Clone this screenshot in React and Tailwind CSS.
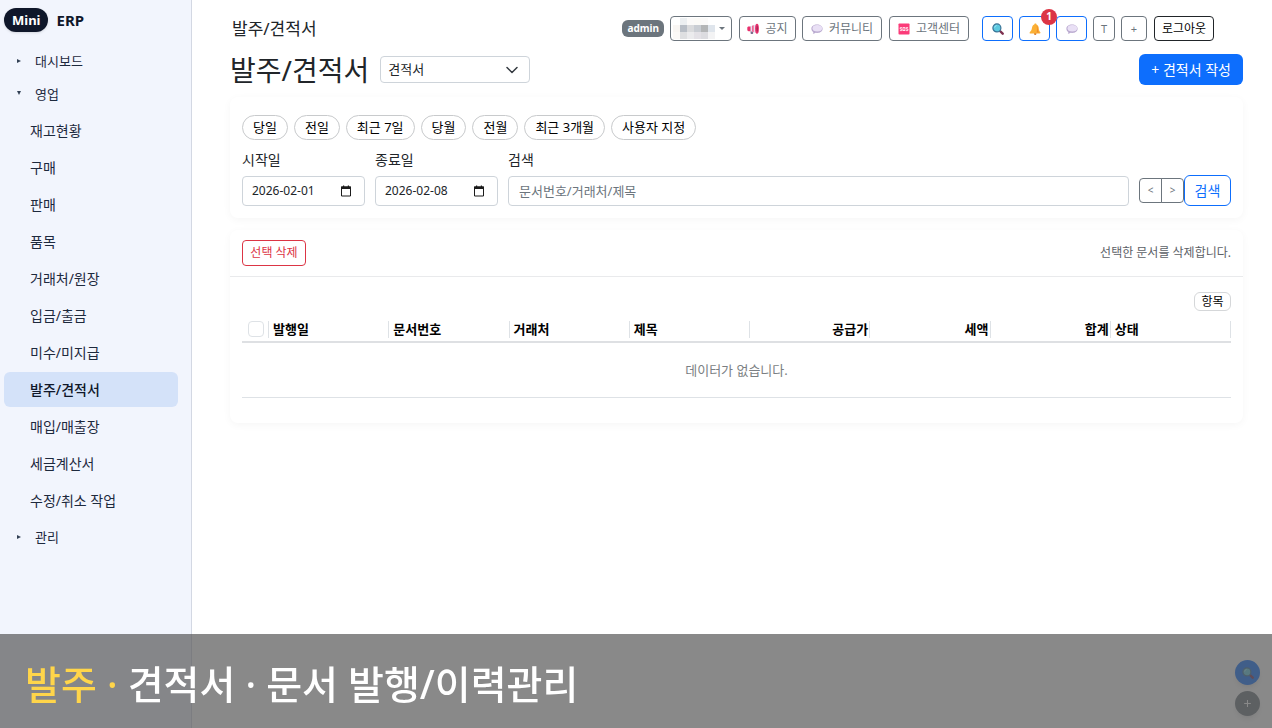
import React, { useState } from 'react';

const salesMenu = [
  '재고현황',
  '구매',
  '판매',
  '품목',
  '거래처/원장',
  '입금/출금',
  '미수/미지급',
  '발주/견적서',
  '매입/매출장',
  '세금계산서',
  '수정/취소 작업',
];

const ranges = ['당일', '전일', '최근 7일', '당월', '전월', '최근 3개월', '사용자 지정'];

const columns = [
  { label: '발행일' },
  { label: '문서번호' },
  { label: '거래처' },
  { label: '제목' },
  { label: '공급가', right: true },
  { label: '세액', right: true },
  { label: '합계', right: true },
  { label: '상태' },
];

const nameCells = [
  ['#ffffff', '#eceff1', '#fbfaf9', '#fbfaf7', '#fbfaf9', '#ffffff'],
  ['#f9f6f3', '#b8bec6', '#dadbdd', '#c9cdd3', '#b4b6b7', '#dfe5ec'],
  ['#fbf9f7', '#dedfe1', '#ebebed', '#e3e1e6', '#dcdce0', '#f3f3f4'],
];

const MagnifierIcon = ({ className = 'size-3' }) => (
  <svg viewBox="0 0 12 12" className={className} aria-hidden="true">
    <path d="M8 8l2.700 2.700" stroke="#7d3050" strokeWidth="2.400" strokeLinecap="round" />
    <circle cx="4.900" cy="4.900" r="4" fill="#5cc9e0" stroke="#3a7396" strokeWidth="1.200" />
    <path d="M2.600 4.600a2.400 2.400 0 0 1 2-2.100" stroke="#a8eefa" strokeWidth="0.800" fill="none" />
  </svg>
);

const BellIcon = () => (
  <svg viewBox="0 0 12 12" className="size-3" aria-hidden="true">
    <circle cx="6.200" cy="10.800" r="1.200" fill="#d9772b" />
    <path d="M6.4 0.4c.8 0 1.1.5 1.1 1.1C9.300 2.200 9.700 3.800 9.800 5.600c.1 1.700.6 2.700 1.500 3.700.4.600.1 1.200-.6 1.200H1.400c-.8 0-1.100-.7-.6-1.300C2 8 2.600 6.900 2.900 5.200 3.200 3.300 3.900 2 5.300 1.500c0-.6.4-1.100 1.100-1.100z" fill="#fbb034" />
    <path d="M7.500 2.200c1 .8 1.200 2.200 1.300 3.800.1 1.500.5 2.500 1.300 3.600H7.700c.4-2.300.5-5-.2-7.400z" fill="#f08a2c" />
  </svg>
);

const SpeechIcon = () => (
  <svg viewBox="0 0 12 12" className="size-3" aria-hidden="true">
    <path d="M6 1.500c3.200 0 5.600 1.800 5.600 4.200S9.200 9.900 6 9.900c-.5 0-1 0-1.500-.1-.7.600-1.700 1-2.700 1 .4-.5.600-1.100.5-1.700C1.200 8.300.4 7.100.4 5.700c0-2.400 2.400-4.200 5.600-4.200z" fill="#b9a9cf" />
    <ellipse cx="6.300" cy="5.200" rx="4.800" ry="3.200" fill="#e9e0f5" />
  </svg>
);

const MegaphoneIcon = () => (
  <svg viewBox="0 0 12 12" className="size-3" aria-hidden="true">
    <path d="M3.600 7.600h2.600v2.600c0 .5-.3.800-.8.800H4.400c-.5 0-.8-.3-.8-.8z" fill="#7c6a8c" />
    <path d="M2.800 3.400L9.600 1.200v9L2.800 8z" fill="#e9dfee" />
    <path d="M1.600 3.400h1.900v4.800H1.600C.9 8.200.3 7.600.3 6.800v-2c0-.8.6-1.400 1.300-1.400z" fill="#e8316d" />
    <path d="M5.200 2.700l1.400-.4v6.800l-1.400-.4z" fill="#f0487e" />
    <ellipse cx="10" cy="5.700" rx="1.900" ry="5" fill="#e8316d" />
    <ellipse cx="10.200" cy="5.700" rx=".7" ry="3.200" fill="#a92557" />
  </svg>
);

const SosIcon = () => (
  <svg viewBox="0 0 12 12" className="size-3" aria-hidden="true">
    <rect x="0.500" y="0.500" width="11" height="11" rx="0.800" fill="#fb3b79" />
    <g fill="none" stroke="#ffffff" strokeWidth="0.800">
      <path d="M4 4.600H2.200v1.400h1.600v1.600H1.900" />
      <rect x="5" y="4.600" width="1.900" height="3" />
      <path d="M10.100 4.600H8.200v1.400h1.700v1.600H7.900" />
    </g>
  </svg>
);

const CalendarIcon = () => (
  <svg viewBox="0 0 12 12" className="size-3 shrink-0" aria-hidden="true">
    <path d="M1.500 2h9v9h-9z" fill="none" stroke="#1b1b1b" />
    <path d="M1 1.500h10V4H1zM3 .5h1.200v1.500H3zM7.800.5H9V2H7.800z" fill="#1b1b1b" />
  </svg>
);

const Arrow = ({ open }) => (
  <svg viewBox="0 0 6 6" className="size-1.5" aria-hidden="true">
    <path d={open ? 'M1 0h4L3 4z' : 'M1 1v4l4-2z'} fill="#334155" />
  </svg>
);

const topButton = 'flex h-[25px] items-center justify-center rounded border bg-white text-xs leading-4 whitespace-nowrap';

const Sidebar = ({ active, onSelect }) => (
  <aside className="w-48 shrink-0 border-r border-[#d3d8e3] bg-[#f2f5fd] text-slate-800">
    <div className="flex h-10 items-center gap-2 px-1 font-bold text-[#0f172a]">
      <span className="rounded-xl bg-[#0f172a] px-2 py-0.5 text-[13px] leading-5 text-white shadow-sm">Mini</span>
      <span className="text-[15px] leading-5">ERP</span>
    </div>
    <nav className="pl-1 pr-[13px]">
      <button className="mt-1 flex h-[33px] w-full items-center gap-[13px] pl-3 text-[13px] leading-5">
        <Arrow />
        대시보드
      </button>
      <button className="flex h-[34px] w-full items-center gap-[13px] pl-3 text-[13px] leading-5">
        <Arrow open />
        영업
      </button>
      <ul className="flex flex-col gap-0.5 pt-0.5">
        {salesMenu.map((item) => (
          <li key={item}>
            <a
              href="#"
              onClick={() => onSelect(item)}
              className={`flex h-[35px] items-center rounded-md pl-[26px] text-sm leading-5 ${active === item ? 'bg-[#d4e2f9] font-medium text-[#0f172a]' : ''}`}
            >
              {item}
            </a>
          </li>
        ))}
      </ul>
      <button className="mt-0.5 flex h-[34px] w-full items-center gap-[13px] pl-3 text-[13px] leading-5">
        <Arrow />
        관리
      </button>
    </nav>
  </aside>
);

const TopBar = () => (
  <header className="flex h-[25px] items-center justify-between pl-0.5 pr-[29px]">
    <span className="text-[17px] leading-6">발주/견적서</span>
    <div className="flex items-center gap-1.5">
      <span className="rounded-md bg-[#6c757d] px-[5px] text-[10px] leading-[17px] font-bold text-white">admin</span>
      <button className={`${topButton} w-[62px] gap-1 border-[#6c757d] pr-1`} aria-label="계정">
        <svg viewBox="0 0 42 21" className="h-[21px] w-[42px]" shapeRendering="crispEdges" aria-hidden="true">
          {nameCells.map((row, y) =>
            row.map((fill, x) => <rect key={`${x}-${y}`} x={x * 7} y={y * 7} width="7" height="7" fill={fill} />)
          )}
        </svg>
        <svg viewBox="0 0 6 3" className="h-[3px] w-1.5" aria-hidden="true">
          <path d="M0 0h6L3 3z" fill="#6c757d" />
        </svg>
      </button>
      <button className={`${topButton} ml-px w-[57px] gap-1.5 border-[#6c757d] text-[#6c757d]`}>
        <MegaphoneIcon />
        공지
      </button>
      <button className={`${topButton} w-20 gap-1.5 border-[#6c757d] text-[#6c757d]`}>
        <SpeechIcon />
        커뮤니티
      </button>
      <button className={`${topButton} ml-px w-20 gap-1.5 border-[#6c757d] text-[#6c757d]`}>
        <SosIcon />
        고객센터
      </button>
      <button className={`${topButton} ml-[7px] w-[31px] border-[#0d6efd]`} aria-label="찾기">
        <MagnifierIcon />
      </button>
      <button className={`${topButton} relative w-[31px] border-[#0d6efd]`} aria-label="알림">
        <BellIcon />
        <span className="absolute -top-2 -right-2 z-10 size-4 rounded-full bg-[#dc3545] text-[10px] leading-[15px] font-bold text-white">
          1
        </span>
      </button>
      <button className={`${topButton} w-[31px] border-[#0d6efd]`} aria-label="채팅">
        <SpeechIcon />
      </button>
      <button className={`${topButton} w-[22px] border-[#6c757d] text-[#6c757d]`}>
        <span className="text-[11px]">T</span>
      </button>
      <button className={`${topButton} w-[26px] border-[#6c757d] text-[#6c757d]`}>
        <span className="text-[11px]">+</span>
      </button>
      <button className={`${topButton} ml-px w-[60px] border-[#212529] text-black`}>로그아웃</button>
    </div>
  </header>
);

const DateField = ({ id, label, value }) => (
  <div className="flex w-[123px] flex-col">
    <label htmlFor={id} className="text-sm leading-5">{label}</label>
    <div className="mt-1.5 flex h-[30px] items-center rounded border border-[#ced4da] pl-[9px] pr-3">
      <input id={id} type="text" defaultValue={value} className="w-full min-w-0 text-xs leading-5 outline-none" />
      <CalendarIcon />
    </div>
  </div>
);

const card = 'rounded-lg bg-white shadow-[0_2px_8px_rgba(0,0,0,0.04)]';

const SearchCard = () => (
  <section className={`${card} px-3 pt-[18px] pb-3`}>
    <div className="flex flex-wrap gap-1.5">
      {ranges.map((range) => (
        <button
          key={range}
          className="h-[25px] rounded-full border border-[#c8cacc] px-2.5 pb-px text-[13px] leading-5 text-black"
        >
          {range}
        </button>
      ))}
    </div>
    <form className="mt-2.5 flex items-end gap-2.5" onSubmit={(e) => e.preventDefault()}>
      <DateField id="from" label="시작일" value="2026-02-01" />
      <DateField id="to" label="종료일" value="2026-02-08" />
      <div className="flex flex-1 flex-col">
        <label htmlFor="keyword" className="text-sm leading-5">검색</label>
        <input
          id="keyword"
          type="text"
          placeholder="문서번호/거래처/제목"
          className="mt-1.5 h-[30px] w-full rounded border border-[#ced4da] px-2.5 text-[13px] leading-5 placeholder:text-[#6c757d]"
        />
      </div>
      <div className="flex items-center">
        <button className="h-[25px] w-[23px] rounded-l border border-[#6c757d] text-[10px] text-[#6c757d]">&lt;</button>
        <button className="-ml-px h-[25px] w-[23px] rounded-r border border-[#6c757d] text-[10px] text-[#6c757d]">&gt;</button>
        <button className="h-[31px] w-[47px] rounded-md border border-[#0d6efd] text-sm leading-5 text-[#0d6efd]">검색</button>
      </div>
    </form>
  </section>
);

const DocumentCard = () => (
  <section className={`${card} mt-3`}>
    <div className="flex items-center justify-between border-b border-[#e9eaec] px-3 py-2.5">
      <button className="h-[26px] w-16 rounded-sm border border-[#dc3545] text-xs leading-4 text-[#dc3545]">선택 삭제</button>
      <span className="text-xs leading-4 text-[#5c6167]">선택한 문서를 삭제합니다.</span>
    </div>
    <div className="px-3 pt-[15px] pb-[25px]">
      <div className="flex justify-end">
        <button className="h-[19px] w-[37px] rounded-md border border-[#d5d7d9] text-xs leading-4 text-black">항목</button>
      </div>
      <table className="mt-1.5 w-full table-fixed border-collapse text-[13px]">
        <thead>
          <tr className="h-[25px] border-b-2 border-[#dee0e3] text-black">
            <th className="w-[27px] p-0">
              <div className="flex h-[17px] items-center justify-end border-r border-[#dee2e6] pr-1">
                <input
                  type="checkbox"
                  aria-label="전체 선택"
                  className="size-4 shrink-0 appearance-none rounded-sm border border-[#dee2e6] bg-white"
                />
              </div>
            </th>
            {columns.map((col) => (
              <th key={col.label} className="p-0 font-bold">
                <div className={`h-[17px] border-r border-[#dee2e6] leading-4 ${col.right ? 'pr-px text-right' : 'pl-1 text-left'}`}>
                  {col.label}
                </div>
              </th>
            ))}
          </tr>
        </thead>
        <tbody>
          <tr className="h-[55px] border-b border-[#dee2e6]">
            <td colSpan={9} className="p-0 text-center leading-5 text-[#7b7f83]">데이터가 없습니다.</td>
          </tr>
        </tbody>
      </table>
    </div>
  </section>
);

function App() {
  const [active, setActive] = useState('발주/견적서');

  return (
    <div className="flex min-h-screen bg-white font-['Noto_Sans','Noto_Sans_CJK_KR',sans-serif] text-[#212529]">
      <Sidebar active={active} onSelect={setActive} />

      <main className="min-w-0 flex-1 pt-4 pr-[29px] pb-28 pl-[38px]">
        <TopBar />
        <div className="mt-[13px] mb-3 flex h-[31px] items-center justify-between">
          <div className="flex items-center gap-[11px]">
            <h1 className="text-[28px] leading-8">발주/견적서</h1>
            <div className="relative">
              <select
                aria-label="문서 종류"
                defaultValue="견적서"
                className="block h-[27px] w-[150px] appearance-none rounded-sm border border-[#ced4da] bg-white pb-0.5 pl-[7px] text-[13px] leading-5"
              >
                <option>견적서</option>
              </select>
              <svg viewBox="0 0 12 12" className="pointer-events-none absolute top-2 right-3 size-3" aria-hidden="true">
                <path d="M1 3.500l5 5 5-5" fill="none" stroke="#343a40" strokeWidth="1.500" strokeLinecap="round" strokeLinejoin="round" />
              </svg>
            </div>
          </div>
          <button className="h-[31px] rounded-md bg-[#0d6efd] px-3 text-sm leading-5 text-white">+ 견적서 작성</button>
        </div>
        <SearchCard />
        <DocumentCard />
      </main>

      <div className="fixed right-3 bottom-3 flex flex-col gap-1.5">
        <button className="flex size-[25px] items-center justify-center rounded-full bg-[#0d6efd] shadow-md" aria-label="빠른 검색">
          <MagnifierIcon />
        </button>
        <button className="size-[25px] rounded-full bg-[#6c757d] text-sm leading-6 text-white shadow-md">+</button>
      </div>

      <div className="fixed inset-x-0 bottom-0 flex h-[94px] items-center bg-[rgba(87,87,87,0.7)] px-[25px] pt-1.5">
        <p className="text-[39px] leading-[50px] font-medium text-white">
          <span className="text-[#ffd54a]">발주 ·</span> 견적서 · 문서 발행/이력관리
        </p>
      </div>
    </div>
  );
}

export default App;
